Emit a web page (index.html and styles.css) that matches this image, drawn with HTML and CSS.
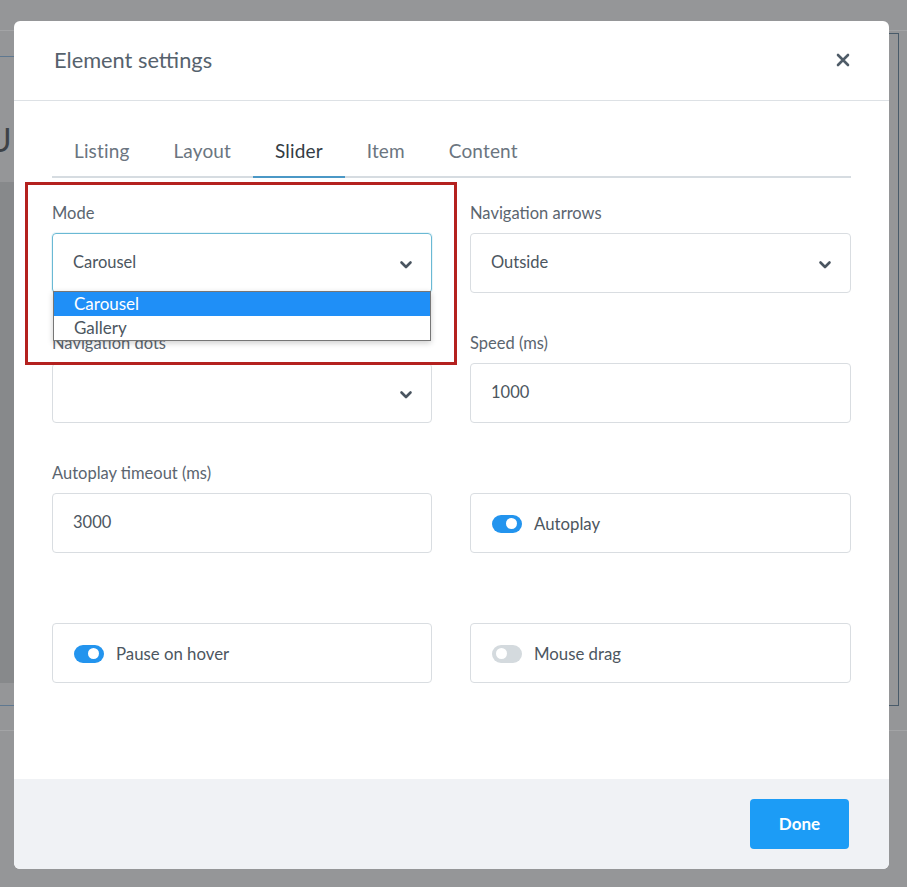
FILE: index.html
```html
<!DOCTYPE html>
<html lang="en">
<head>
<meta charset="utf-8">
<title>Element settings</title>
<link rel="stylesheet" href="styles.css">
</head>
<body>
<div class="backdrop">
  <div class="bg-topline"></div>
  <div class="bg-blue-top"></div>
  <div class="bg-letter">U</div>
  <div class="bg-panel"></div>
  <div class="bg-blue-bottom"></div>
  <div class="bg-bottomline"></div>
  <div class="bg-rightbox"></div>
</div>

<div class="modal">
  <header class="modal-header">
    <h1 class="modal-title">Element settings</h1>
    <button class="close-btn" aria-label="Close">
      <svg width="14" height="14" viewBox="0 0 14 14"><path d="M2 2 L12 12 M12 2 L2 12" stroke="#4f5c68" stroke-width="2.6" stroke-linecap="round" fill="none"/></svg>
    </button>
  </header>

  <div class="modal-body">
    <nav class="tabs">
      <span class="tab">Listing</span>
      <span class="tab">Layout</span>
      <span class="tab active">Slider</span>
      <span class="tab">Item</span>
      <span class="tab">Content</span>
    </nav>

    <div class="form-grid">
      <div class="field mode-field">
        <div class="label">Mode</div>
        <div class="control select focused">
          <span>Carousel</span>
          <svg class="chev" width="14" height="10" viewBox="0 0 14 10"><path d="M2.5 2.5 L7 7 L11.5 2.5" stroke="#4a5560" stroke-width="2.6" fill="none" stroke-linecap="round" stroke-linejoin="round"/></svg>
        </div>
        <ul class="dropdown">
          <li class="opt selected">Carousel</li>
          <li class="opt">Gallery</li>
        </ul>
      </div>

      <div class="field">
        <div class="label">Navigation arrows</div>
        <div class="control select">
          <span>Outside</span>
          <svg class="chev" width="14" height="10" viewBox="0 0 14 10"><path d="M2.5 2.5 L7 7 L11.5 2.5" stroke="#4a5560" stroke-width="2.6" fill="none" stroke-linecap="round" stroke-linejoin="round"/></svg>
        </div>
      </div>

      <div class="field">
        <div class="label">Navigation dots</div>
        <div class="control select">
          <span></span>
          <svg class="chev" width="14" height="10" viewBox="0 0 14 10"><path d="M2.5 2.5 L7 7 L11.5 2.5" stroke="#4a5560" stroke-width="2.6" fill="none" stroke-linecap="round" stroke-linejoin="round"/></svg>
        </div>
      </div>

      <div class="field">
        <div class="label">Speed (ms)</div>
        <div class="control"><span>1000</span></div>
      </div>

      <div class="field">
        <div class="label">Autoplay timeout (ms)</div>
        <div class="control"><span>3000</span></div>
      </div>

      <div class="field">
        <div class="label"></div>
        <div class="control toggle-box">
          <span class="switch on"></span>
          <span>Autoplay</span>
        </div>
      </div>

      <div class="field">
        <div class="label"></div>
        <div class="control toggle-box">
          <span class="switch on"></span>
          <span>Pause on hover</span>
        </div>
      </div>

      <div class="field">
        <div class="label"></div>
        <div class="control toggle-box">
          <span class="switch"></span>
          <span>Mouse drag</span>
        </div>
      </div>
    </div>
  </div>

  <footer class="modal-footer">
    <button class="done-btn">Done</button>
  </footer>

  <div class="annotation"></div>
</div>
</body>
</html>
```

FILE: styles.css
```css
* { box-sizing: border-box; }

html, body {
  margin: 0;
  padding: 0;
}

body {
  width: 907px;
  height: 887px;
  overflow: hidden;
  background: #959698;
  font-family: Lato, "Open Sans", Arial, sans-serif;
  position: relative;
}

/* page behind the overlay */
.backdrop { position: absolute; inset: 0; }
.bg-topline { position: absolute; left: 0; right: 0; top: 30px; height: 1px; background: #a3a4a6; }
.bg-blue-top { position: absolute; left: 0; width: 14px; top: 56px; height: 1px; background: #5f7890; }
.bg-letter { position: absolute; left: -12px; top: 120px; font-size: 32px; color: #3d4247; font-family: Lato, sans-serif; }
.bg-panel { position: absolute; left: 0; width: 14px; top: 182px; height: 501px; background: #87898b; }
.bg-blue-bottom { position: absolute; left: 0; width: 14px; top: 705px; height: 1px; background: #5f7890; }
.bg-bottomline { position: absolute; left: 0; right: 0; top: 730px; height: 1px; background: #a3a4a6; }
.bg-rightbox {
  position: absolute; left: 860px; width: 39px; top: 33px; height: 673px;
  border: 1px solid #485a69; border-left: none;
}

/* modal */
.modal {
  position: absolute;
  left: 14px;
  top: 21px;
  width: 875px;
  height: 848px;
  background: #fff;
  border-radius: 6px;
  overflow: hidden;
  display: flex;
  flex-direction: column;
}

.modal-header {
  height: 80px;
  flex: none;
  display: flex;
  align-items: center;
  justify-content: space-between;
  padding: 0 38px 2px 40px;
  border-bottom: 1px solid #dde1e5;
}

.modal-title {
  margin: 0;
  font-size: 21.8px;
  font-weight: 400;
  color: #56626d;
}

.close-btn {
  border: 0;
  background: none;
  padding: 0;
  width: 16px;
  height: 16px;
  display: flex;
  align-items: center;
  justify-content: center;
}

.modal-body {
  flex: 1;
  padding: 24px 38px 0;
}

.tabs {
  display: flex;
  height: 53px;
  border-bottom: 2px solid #d6dce1;
}

.tab {
  padding: 0 22px;
  font-size: 19px;
  letter-spacing: 0.15px;
  color: #6b7580;
  display: flex;
  align-items: center;
  margin-bottom: -2px;
  border-bottom: 2px solid transparent;
}

.tab.active {
  color: #333c44;
  border-bottom-color: #4b98c6;
}

.form-grid {
  margin-top: 25px;
  display: grid;
  grid-template-columns: 380px 381px;
  column-gap: 38px;
}

.field {
  position: relative;
  margin-bottom: 40px;
}

.label {
  height: 20px;
  line-height: 20px;
  font-size: 16.5px;
  color: #5b656f;
  margin-bottom: 10px;
}

.control {
  height: 60px;
  border: 1px solid #d9dde1;
  border-radius: 4px;
  padding: 0 20px 2px;
  display: flex;
  align-items: center;
  font-size: 16.5px;
  color: #4c5660;
}

.select { justify-content: space-between; padding-right: 18px; }

.select.focused {
  border-color: #6ab9d4;
  box-shadow: 0 0 0 1px rgba(106, 185, 212, 0.15);
}

.chev { display: block; margin-top: 5px; }

.dropdown {
  position: absolute;
  left: 1px;
  top: 88px;
  width: 378px;
  margin: 0;
  padding: 0;
  list-style: none;
  background: #fff;
  border: 1px solid #767676;
  box-shadow: 0 2px 6px rgba(0, 0, 0, 0.2);
  z-index: 5;
}

.opt {
  height: 24px;
  line-height: 24px;
  padding-left: 20px;
  font-size: 17px;
  color: #4c5660;
}

.opt.selected {
  background: #1f8ff7;
  color: #fff;
}

.toggle-box { padding-left: 21px; padding-top: 1px; padding-bottom: 0; }

.toggle-box span:last-child { font-size: 16.8px; }

.switch {
  width: 30px;
  height: 18px;
  border-radius: 9px;
  background: #d4dade;
  position: relative;
  margin-right: 12px;
  flex: none;
}

.switch::after {
  content: "";
  position: absolute;
  top: 3.5px;
  left: 4px;
  width: 11px;
  height: 11px;
  border-radius: 50%;
  background: #fff;
}

.switch.on { background: #2394ee; }
.switch.on::after { left: auto; right: 5px; }

.modal-footer {
  height: 90px;
  flex: none;
  background: #f0f2f5;
  display: flex;
  align-items: center;
  justify-content: flex-end;
  padding-right: 40px;
}

.done-btn {
  width: 99px;
  height: 50px;
  border: 0;
  border-radius: 4px;
  background: #1c9cf6;
  color: #fff;
  font-family: inherit;
  font-weight: 700;
  font-size: 17px;
  padding-bottom: 2px;
}

.annotation {
  position: absolute;
  left: 11px;
  top: 161px;
  width: 432px;
  height: 183px;
  border: 3px solid #b4211f;
  pointer-events: none;
}
```
